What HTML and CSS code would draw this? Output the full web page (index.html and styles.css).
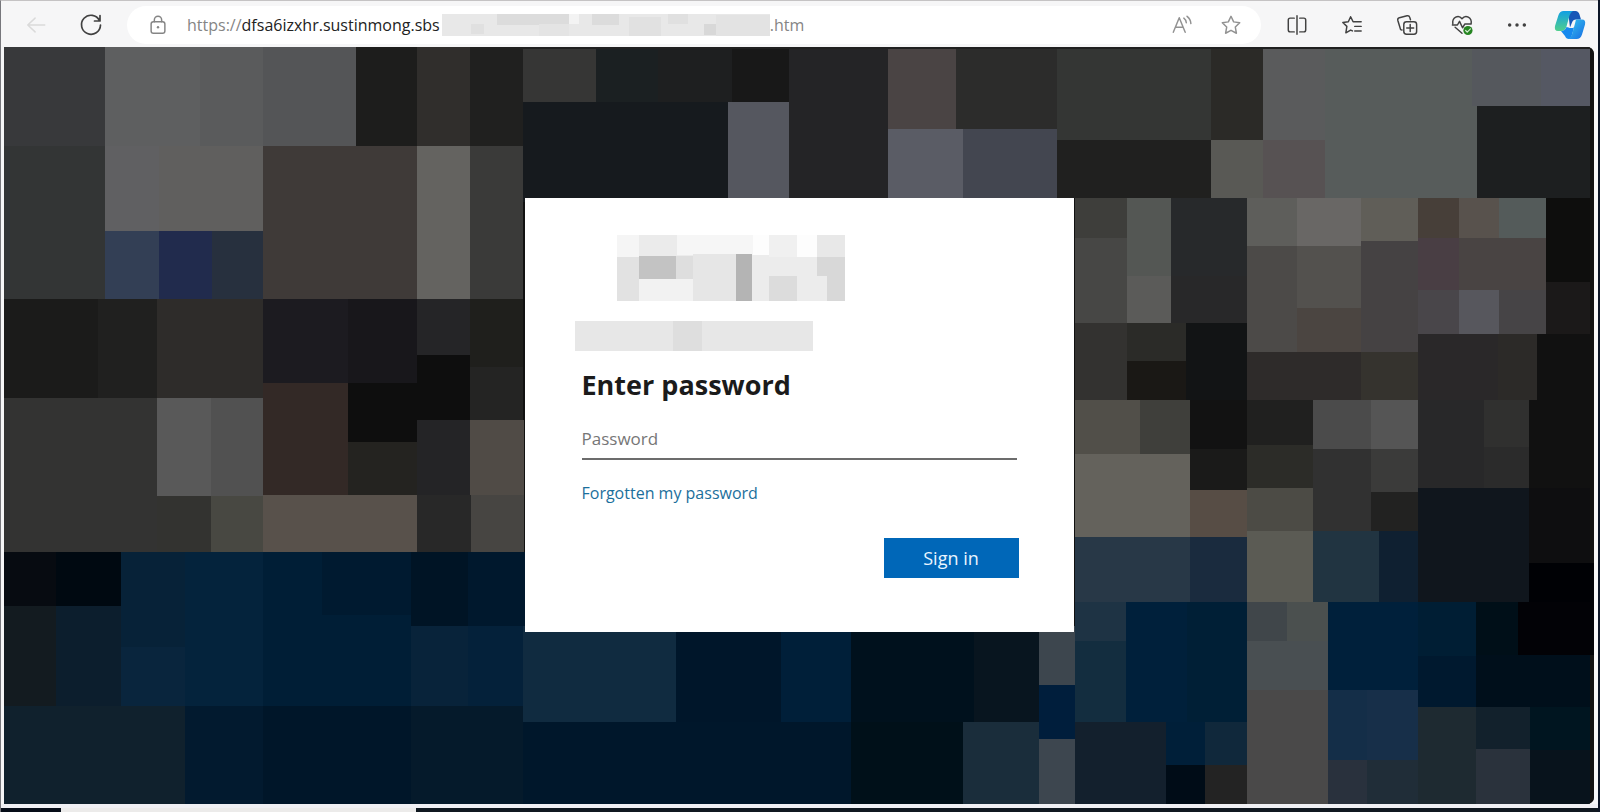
FILE: index.html
```html
<!DOCTYPE html>
<html lang="en">
<head>
<meta charset="utf-8">
<title>Enter password</title>
<link rel="stylesheet" href="styles.css">
</head>
<body>
<div class="window">
  <header class="toolbar">
    <button class="tool back" type="button" aria-label="Back" disabled>
      <svg viewBox="0 0 24 24"><path d="M21.500 12H3M11 4.500 3 12l8 7.500"/></svg>
    </button>
    <button class="tool reload" type="button" aria-label="Refresh">
      <svg viewBox="0 0 24 24"><path d="M20.500 7.500A9.500 9.500 0 1 0 21.500 12M21 2.500v5.500h-5.500"/></svg>
    </button>
    <div class="address">
      <svg class="lock" viewBox="0 0 24 24"><rect x="4.500" y="8.500" width="15" height="12.500" rx="2.500"/><path d="M8 8.500V6.500a4 4 0 0 1 8 0v2"/><circle class="solid" cx="12" cy="14.500" r="1.300"/></svg>
      <div class="url"><span>https://</span><strong>dfsa6izxhr.sustinmong.sbs</strong><svg class="url-mask" viewBox="0 0 328 22" preserveAspectRatio="none" shape-rendering="crispEdges"><rect width="328" height="22" fill="#e8e8e8"/><rect x="55" width="72" height="11" fill="#dcdcdc"/><rect x="97" y="10" width="30" height="12" fill="#e4e4e4"/><rect x="29" y="10" width="13" height="10" fill="#e0e0e0"/><rect x="127" width="10" height="10" fill="#f3f3f3"/><rect x="150" width="27" height="11" fill="#dcdcdc"/><rect x="187" y="3" width="32" height="19" fill="#e1e1e1"/><rect x="226" width="20" height="10" fill="#e0e0e0"/><rect x="262" y="10" width="12" height="11" fill="#d8d8d8"/><rect x="274" y="1" width="54" height="21" fill="#e3e3e3"/></svg><span>.htm</span></div>
      <button class="tool read" type="button" aria-label="Read aloud">
        <svg viewBox="0 0 24 24"><path d="M2.500 20 9 4l6.500 16M4.800 14.500h8.400M14 4.500q2.500 2 2.700 5M17.500 2.500q4 3 4.200 8"/></svg>
      </button>
      <button class="tool star" type="button" aria-label="Add to favourites">
        <svg viewBox="0 0 24 24"><path d="m12 2.500 2.900 6.100 6.600.9-4.800 4.700 1.200 6.800-5.900-3.200L6.100 21l1.200-6.800L2.500 9.500l6.600-.9z"/></svg>
      </button>
    </div>
    <nav class="tools" aria-label="Browser tools">
      <button class="tool" type="button" aria-label="Split screen">
        <svg viewBox="0 0 24 24"><path d="M12 2v20M9 4.500H4.500a2 2 0 0 0-2 2v11a2 2 0 0 0 2 2H9M15 4.500h4.500a2 2 0 0 1 2 2v11a2 2 0 0 1-2 2H15"/></svg>
      </button>
      <button class="tool" type="button" aria-label="Favourites">
        <svg viewBox="0 0 24 24"><path d="M15 8.500h-1.800L10.500 3 8 8.500l-6 .8 4.400 4.200L5.300 20.500l5.200-3 2 1M14.500 8.500H22M15 13.500h7M15 18.500h7"/></svg>
      </button>
      <button class="tool" type="button" aria-label="Collections">
        <svg viewBox="0 0 24 24"><rect x="8.500" y="8.500" width="14" height="13.500" rx="3"/><path d="M15.500 11.500v7.500M11.700 15.200h7.600M6.500 17.500 5 17 2 7a2.500 2.500 0 0 1 1.700-3L12 2a2.500 2.500 0 0 1 3 1.700l.8 2.500"/></svg>
      </button>
      <button class="tool" type="button" aria-label="Browser essentials">
        <svg viewBox="0 0 24 24"><path d="M2 10.500C1 4 8 0 12 5.200 16 0 23 4 22 10.500M4.500 14.500 12 21M1.500 12H7l2.300-4 3.300 7 2.400-4h7"/><circle class="badge" cx="18.500" cy="18" r="5"/><path class="tick" d="m16 18 1.700 1.700 3.500-3.500"/></svg>
      </button>
      <button class="tool" type="button" aria-label="Settings and more">
        <svg viewBox="0 0 24 24"><g class="solid"><circle cx="4" cy="12" r="1.900"/><circle cx="12" cy="12" r="1.900"/><circle cx="20" cy="12" r="1.900"/></g></svg>
      </button>
      <button class="tool copilot" type="button" aria-label="Copilot">
        <svg viewBox="0 0 32 30">
          <defs>
            <linearGradient id="cool" x1="0" y1="0" x2="0" y2="1"><stop offset="0" stop-color="#129fe4"/><stop offset="1" stop-color="#50cf8c"/></linearGradient>
            <linearGradient id="deep" x1="0" y1="0" x2="1" y2="1"><stop offset="0" stop-color="#35c6ee"/><stop offset="1" stop-color="#176be3"/></linearGradient>
          </defs>
          <path fill="#1656b7" d="M14 1h7.500q3 0 4 3.500l1.500 5h-5q-3 0-4 3l-2 5z"/>
          <path fill="url(#cool)" d="M9.500 1H19q-2.500 1-3.500 4.500l-3 11Q11 21 7 21H4q-4 0-3-5L4.500 5Q6 1 9.500 1"/>
          <path fill="#1689ee" d="M7 21q4 0 5.500-4l2 .5q2.500 1 5.500 0l-2 7.500q-1 3.500-3 4-3 0-4-3z"/>
          <path fill="url(#deep)" d="M22 9.500h6q4 0 3 5l-3 10Q26.500 29 22.500 29H14q3-1 4-4.500l3-11q.5-2 1-4"/>
        </svg>
      </button>
    </nav>
  </header>

  <main class="page">
    <svg class="mosaic" viewBox="4 47 1589 757" preserveAspectRatio="none" shape-rendering="crispEdges" aria-hidden="true">
      <rect x="4" y="47" width="1589" height="757" fill="#111"/>
      <!-- left, upper rows -->
      <rect x="4" y="47" width="101" height="99" fill="#38393b"/>
      <rect x="105" y="47" width="95" height="99" fill="#5e5f60"/>
      <rect x="200" y="47" width="64" height="99" fill="#5a5b5c"/>
      <rect x="263" y="47" width="93" height="99" fill="#545557"/>
      <rect x="356" y="47" width="61" height="99" fill="#1d1d1c"/>
      <rect x="417" y="47" width="53" height="99" fill="#302e2c"/>
      <rect x="470" y="47" width="53" height="99" fill="#20201f"/>
      <rect x="4" y="146" width="101" height="153" fill="#333535"/>
      <rect x="105" y="146" width="54" height="85" fill="#606062"/>
      <rect x="159" y="146" width="105" height="85" fill="#605f5e"/>
      <rect x="105" y="231" width="54" height="68" fill="#333f55"/>
      <rect x="159" y="231" width="53" height="68" fill="#212b4d"/>
      <rect x="212" y="231" width="52" height="68" fill="#27303e"/>
      <rect x="263" y="146" width="154" height="153" fill="#3f3a38"/>
      <rect x="417" y="146" width="53" height="153" fill="#646360"/>
      <rect x="470" y="146" width="53" height="153" fill="#3a3a39"/>
      <rect x="4" y="299" width="94" height="99" fill="#1b1b1a"/>
      <rect x="98" y="299" width="59" height="99" fill="#20201f"/>
      <rect x="157" y="299" width="107" height="99" fill="#2e2c2a"/>
      <rect x="263" y="299" width="85" height="84" fill="#1c1b20"/>
      <rect x="348" y="299" width="69" height="84" fill="#18171b"/>
      <rect x="417" y="299" width="53" height="56" fill="#252527"/>
      <rect x="470" y="299" width="53" height="68" fill="#1f1f1c"/>
      <rect x="470" y="367" width="53" height="53" fill="#242423"/>
      <rect x="4" y="398" width="153" height="154" fill="#333332"/>
      <rect x="157" y="398" width="54" height="98" fill="#595959"/>
      <rect x="211" y="398" width="53" height="98" fill="#515151"/>
      <rect x="263" y="383" width="85" height="112" fill="#332926"/>
      <rect x="348" y="383" width="69" height="59" fill="#0e0e0e"/>
      <rect x="417" y="355" width="53" height="65" fill="#0e0e0e"/>
      <rect x="348" y="442" width="69" height="53" fill="#242320"/>
      <rect x="417" y="420" width="53" height="75" fill="#242426"/>
      <rect x="470" y="420" width="54" height="75" fill="#504b46"/>
      <rect x="157" y="496" width="54" height="56" fill="#333330"/>
      <rect x="211" y="496" width="53" height="56" fill="#484842"/>
      <rect x="263" y="495" width="154" height="57" fill="#58514b"/>
      <rect x="417" y="495" width="54" height="57" fill="#282828"/>
      <rect x="471" y="495" width="53" height="57" fill="#474542"/>
      <!-- left, lower rows -->
      <rect x="4" y="552" width="52" height="54" fill="#070b11"/>
      <rect x="56" y="552" width="65" height="54" fill="#000911"/>
      <rect x="121" y="552" width="64" height="95" fill="#072238"/>
      <rect x="185" y="552" width="79" height="154" fill="#04233c"/>
      <rect x="263" y="552" width="149" height="154" fill="#001e36"/>
      <rect x="322" y="552" width="90" height="63" fill="#001a30"/>
      <rect x="411" y="552" width="57" height="74" fill="#001425"/>
      <rect x="468" y="552" width="57" height="74" fill="#00182d"/>
      <rect x="4" y="606" width="52" height="100" fill="#131b20"/>
      <rect x="56" y="606" width="65" height="100" fill="#0c1e2d"/>
      <rect x="121" y="647" width="64" height="59" fill="#09253d"/>
      <rect x="411" y="626" width="57" height="80" fill="#08233a"/>
      <rect x="468" y="626" width="57" height="80" fill="#04213a"/>
      <rect x="4" y="706" width="181" height="98" fill="#10212d"/>
      <rect x="185" y="706" width="79" height="98" fill="#021a2f"/>
      <rect x="263" y="706" width="149" height="98" fill="#001629"/>
      <rect x="411" y="706" width="113" height="98" fill="#051a2b"/>
      <!-- above the card -->
      <rect x="523" y="47" width="1070" height="2" fill="#202020"/>
      <rect x="523" y="49" width="73" height="53" fill="#363635"/>
      <rect x="596" y="49" width="62" height="53" fill="#1b2022"/>
      <rect x="658" y="49" width="75" height="53" fill="#1e1f20"/>
      <rect x="732" y="49" width="57" height="53" fill="#181818"/>
      <rect x="523" y="102" width="205" height="100" fill="#161a1e"/>
      <rect x="728" y="102" width="61" height="100" fill="#55575f"/>
      <rect x="789" y="49" width="98" height="153" fill="#242426"/>
      <rect x="887" y="49" width="68" height="80" fill="#4a4444"/>
      <rect x="955" y="49" width="101" height="80" fill="#2c2c2b"/>
      <rect x="887" y="129" width="75" height="73" fill="#5a5c65"/>
      <rect x="962" y="129" width="94" height="73" fill="#434650"/>
      <rect x="1056" y="49" width="154" height="91" fill="#343634"/>
      <rect x="1210" y="49" width="52" height="91" fill="#2b2a27"/>
      <rect x="1056" y="140" width="154" height="58" fill="#20201f"/>
      <rect x="1210" y="140" width="52" height="58" fill="#595955"/>
      <rect x="1262" y="49" width="62" height="91" fill="#5a5b5c"/>
      <rect x="1262" y="140" width="62" height="58" fill="#575253"/>
      <rect x="1324" y="49" width="152" height="149" fill="#575c5b"/>
      <rect x="1471" y="49" width="69" height="57" fill="#55585d"/>
      <rect x="1540" y="49" width="49" height="57" fill="#555863"/>
      <rect x="1476" y="106" width="113" height="92" fill="#1d1f20"/>
      <!-- right, upper rows -->
      <rect x="1074" y="198" width="52" height="40" fill="#3e3e3b"/>
      <rect x="1074" y="238" width="52" height="85" fill="#474745"/>
      <rect x="1126" y="198" width="44" height="78" fill="#545754"/>
      <rect x="1126" y="276" width="44" height="47" fill="#5b5b59"/>
      <rect x="1170" y="198" width="76" height="78" fill="#27292b"/>
      <rect x="1170" y="276" width="76" height="47" fill="#282829"/>
      <rect x="1246" y="198" width="50" height="48" fill="#5e5e5b"/>
      <rect x="1296" y="198" width="64" height="48" fill="#696765"/>
      <rect x="1360" y="198" width="57" height="43" fill="#605e58"/>
      <rect x="1417" y="198" width="41" height="40" fill="#473f39"/>
      <rect x="1458" y="198" width="40" height="40" fill="#58524d"/>
      <rect x="1498" y="198" width="47" height="40" fill="#545b5a"/>
      <rect x="1545" y="198" width="44" height="84" fill="#0e0e0d"/>
      <rect x="1545" y="282" width="44" height="52" fill="#1b1919"/>
      <rect x="1246" y="246" width="50" height="106" fill="#4c4a48"/>
      <rect x="1296" y="246" width="64" height="62" fill="#53514e"/>
      <rect x="1296" y="308" width="64" height="44" fill="#4b4541"/>
      <rect x="1360" y="241" width="57" height="111" fill="#454243"/>
      <rect x="1417" y="238" width="41" height="52" fill="#493e44"/>
      <rect x="1458" y="238" width="87" height="52" fill="#494443"/>
      <rect x="1417" y="290" width="41" height="44" fill="#49464a"/>
      <rect x="1458" y="290" width="40" height="44" fill="#57575d"/>
      <rect x="1498" y="290" width="47" height="44" fill="#464446"/>
      <rect x="1074" y="323" width="52" height="77" fill="#333230"/>
      <rect x="1126" y="323" width="59" height="38" fill="#2b2b28"/>
      <rect x="1126" y="361" width="59" height="39" fill="#1a1815"/>
      <rect x="1185" y="323" width="61" height="77" fill="#121415"/>
      <rect x="1246" y="352" width="114" height="48" fill="#2e2b2a"/>
      <rect x="1360" y="352" width="57" height="48" fill="#35332e"/>
      <rect x="1417" y="334" width="80" height="66" fill="#2a2829"/>
      <rect x="1497" y="334" width="39" height="66" fill="#2c2a28"/>
      <rect x="1074" y="400" width="65" height="54" fill="#514f49"/>
      <rect x="1139" y="400" width="50" height="54" fill="#3f3f3b"/>
      <rect x="1189" y="400" width="57" height="49" fill="#121212"/>
      <rect x="1189" y="449" width="57" height="41" fill="#1a1a19"/>
      <rect x="1246" y="400" width="66" height="45" fill="#20201f"/>
      <rect x="1246" y="445" width="66" height="43" fill="#2c2c28"/>
      <rect x="1312" y="400" width="58" height="49" fill="#4b4b4b"/>
      <rect x="1370" y="400" width="47" height="49" fill="#555"/>
      <rect x="1312" y="449" width="58" height="82" fill="#313131"/>
      <rect x="1370" y="449" width="47" height="43" fill="#3b3b3a"/>
      <rect x="1370" y="492" width="47" height="39" fill="#222221"/>
      <rect x="1417" y="400" width="66" height="88" fill="#282829"/>
      <rect x="1483" y="400" width="45" height="47" fill="#30302f"/>
      <rect x="1483" y="447" width="45" height="41" fill="#2b2b2b"/>
      <rect x="1074" y="454" width="115" height="83" fill="#64625c"/>
      <rect x="1189" y="490" width="57" height="47" fill="#574d45"/>
      <rect x="1246" y="488" width="66" height="43" fill="#4c4b45"/>
      <!-- right, lower rows -->
      <rect x="1074" y="537" width="115" height="65" fill="#283847"/>
      <rect x="1189" y="537" width="57" height="65" fill="#1a2b3e"/>
      <rect x="1246" y="531" width="66" height="71" fill="#5b5b54"/>
      <rect x="1312" y="531" width="66" height="71" fill="#213441"/>
      <rect x="1378" y="531" width="39" height="71" fill="#0f2031"/>
      <rect x="1417" y="488" width="111" height="114" fill="#10161d"/>
      <rect x="1528" y="488" width="61" height="75" fill="#0e0e10"/>
      <rect x="1528" y="563" width="65" height="92" fill="#000105"/>
      <rect x="1517" y="602" width="72" height="53" fill="#020206"/>
      <rect x="1074" y="602" width="51" height="39" fill="#1e3344"/>
      <rect x="1074" y="641" width="51" height="81" fill="#132d3f"/>
      <rect x="1125" y="602" width="61" height="120" fill="#00203b"/>
      <rect x="1186" y="602" width="60" height="120" fill="#001f36"/>
      <rect x="1246" y="602" width="40" height="39" fill="#40464a"/>
      <rect x="1286" y="602" width="41" height="39" fill="#4b504f"/>
      <rect x="1246" y="641" width="81" height="49" fill="#494f52"/>
      <rect x="1246" y="690" width="81" height="114" fill="#4a4949"/>
      <rect x="1327" y="602" width="90" height="88" fill="#00203b"/>
      <rect x="1417" y="602" width="58" height="54" fill="#001e34"/>
      <rect x="1417" y="656" width="58" height="51" fill="#00192f"/>
      <rect x="1475" y="602" width="42" height="53" fill="#000f18"/>
      <rect x="1475" y="655" width="114" height="52" fill="#000f1b"/>
      <rect x="1327" y="690" width="39" height="70" fill="#142e48"/>
      <rect x="1366" y="690" width="51" height="70" fill="#172f49"/>
      <rect x="1327" y="760" width="39" height="44" fill="#29313d"/>
      <rect x="1366" y="760" width="51" height="44" fill="#202d38"/>
      <rect x="1417" y="707" width="58" height="97" fill="#1e2a31"/>
      <rect x="1475" y="707" width="54" height="42" fill="#12212c"/>
      <rect x="1475" y="749" width="54" height="55" fill="#2a323c"/>
      <rect x="1529" y="707" width="60" height="43" fill="#001520"/>
      <rect x="1529" y="750" width="60" height="54" fill="#08131c"/>
      <rect x="1074" y="722" width="91" height="82" fill="#13202d"/>
      <rect x="1165" y="722" width="39" height="43" fill="#001f39"/>
      <rect x="1204" y="722" width="42" height="43" fill="#10283b"/>
      <rect x="1165" y="765" width="39" height="39" fill="#000c17"/>
      <rect x="1204" y="765" width="42" height="39" fill="#232323"/>
      <!-- below the card -->
      <rect x="523" y="626" width="153" height="96" fill="#102b40"/>
      <rect x="676" y="626" width="106" height="96" fill="#00162a"/>
      <rect x="781" y="626" width="69" height="96" fill="#001f39"/>
      <rect x="850" y="626" width="123" height="96" fill="#00111d"/>
      <rect x="973" y="626" width="65" height="96" fill="#08151f"/>
      <rect x="523" y="722" width="327" height="82" fill="#00172b"/>
      <rect x="850" y="722" width="112" height="82" fill="#001019"/>
      <rect x="962" y="722" width="76" height="82" fill="#1a2d3b"/>
      <rect x="1038" y="626" width="36" height="59" fill="#3d464e"/>
      <rect x="1038" y="685" width="36" height="54" fill="#001e3c"/>
      <rect x="1038" y="739" width="36" height="65" fill="#3d464f"/>
    </svg>

    <form class="card" onsubmit="return false">
      <svg class="logo-mask" viewBox="0 0 228 66" shape-rendering="crispEdges" aria-hidden="true">
        <rect width="228" height="66" fill="#ececec"/>
        <rect width="22" height="22" fill="#f5f5f5"/><rect x="22" width="38" height="22" fill="#ebebeb"/><rect x="60" width="76" height="20" fill="#f6f6f6"/><rect x="136" width="16" height="20" fill="#fdfdfd"/><rect x="152" width="28" height="22" fill="#f0f0f0"/><rect x="180" width="20" height="22" fill="#fdfdfd"/><rect x="200" width="28" height="22" fill="#e8e8e8"/>
        <rect y="22" width="22" height="44" fill="#e2e2e2"/><rect x="22" y="21" width="37" height="23" fill="#c3c3c3"/><rect x="59" y="21" width="17" height="23" fill="#dedede"/><rect x="22" y="44" width="54" height="22" fill="#f2f2f2"/><rect x="76" y="19" width="43" height="47" fill="#e6e6e6"/><rect x="119" y="19" width="16" height="47" fill="#b4b4b4"/><rect x="152" y="41" width="28" height="25" fill="#dcdcdc"/><rect x="200" y="22" width="28" height="19" fill="#d8d8d8"/><rect x="210" y="41" width="18" height="25" fill="#d8d8d8"/>
      </svg>
      <svg class="user-mask" viewBox="0 0 238 30" shape-rendering="crispEdges" aria-hidden="true"><rect width="238" height="30" fill="#e7e7e7"/><rect x="98" width="29" height="30" fill="#dedede"/></svg>
      <div class="fields">
        <h1><label for="password">Enter password</label></h1>
        <input id="password" type="password" placeholder="Password" autocomplete="off">
        <a href="#">Forgotten my password</a>
        <button class="submit" type="submit">Sign in</button>
      </div>
    </form>
  </main>
  <footer class="edge"></footer>
</div>
</body>
</html>
```

FILE: styles.css
```css
* {
  box-sizing: border-box;
}

body {
  margin: 0;
  background: #0c1526;
  font-family: "Open Sans", "Noto Sans", sans-serif;
}

.window {
  display: flex;
  flex-direction: column;
  min-height: 100vh;
  margin-right: 2px;
  background: #f6f6f7;
  border-top: 1px solid #c5c3c4;
  border-left: 1px solid #77777c;
}

.toolbar {
  display: flex;
  align-items: center;
  height: 46px;
  padding: 2px 10px 0 17px;
}

.tool {
  display: grid;
  place-items: center;
  width: 36px;
  height: 36px;
  padding: 0;
  border: 0;
  background: none;
  color: #414141;
}

.tool svg,
.lock {
  width: 22px;
  height: 22px;
  fill: none;
  stroke: currentColor;
  stroke-width: 1.6;
  stroke-linecap: round;
  stroke-linejoin: round;
}

.back {
  color: #dadada;
}

.reload {
  margin: 0 18px 0 19px;
}

.reload svg {
  width: 24px;
  height: 24px;
  stroke-width: 1.7;
}

.address {
  display: flex;
  flex: 1;
  align-items: center;
  height: 38px;
  padding: 0 12px 0 20px;
  border-radius: 19px;
  background: #fff;
}

.lock {
  color: #858585;
}

.url {
  display: flex;
  flex: 1;
  align-items: center;
  margin-left: 18px;
  color: #858585;
  font-size: 16px;
  line-height: 24px;
}

.url strong {
  color: #222;
  font-weight: 400;
}

.url-mask {
  width: 328px;
  height: 22px;
  margin-left: 2px;
}

.read,
.star {
  color: #929292;
}

.read {
  margin-right: 13px;
}

.tool .solid,
.lock .solid {
  fill: currentColor;
  stroke: none;
}

.tools {
  display: flex;
  gap: 19px;
  margin-left: 18px;
}

.tool .badge {
  fill: #268522;
  stroke: none;
}

.tool .tick {
  stroke: #d5edd2;
  stroke-width: 1.3;
}

.tool.copilot {
  margin-left: -2px;
}

.tool.copilot svg {
  width: 32px;
  height: 30px;
  stroke: none;
}

.page {
  position: relative;
  display: grid;
  flex: 1;
  place-items: center;
  margin: 0 4px 0 3px;
  padding-bottom: 21px;
  overflow: hidden;
  border-radius: 0 7px 7px 0;
  background: #111;
}

.mosaic {
  position: absolute;
  inset: 0;
  width: 100%;
  height: 100%;
}

.card {
  position: relative;
  display: flex;
  flex-direction: column;
  width: 549px;
  max-width: 100%;
  padding: 37px 50px 54px;
  background: #fff;
}

.logo-mask {
  width: 228px;
  height: 66px;
  margin-left: 42px;
}

.user-mask {
  width: 238px;
  height: 30px;
  margin-top: 20px;
}

.fields {
  display: flex;
  flex-direction: column;
  margin: 14px 7px 0;
}

h1 {
  margin: 0;
  color: #1b1b1b;
  font-size: 27px;
  font-weight: 700;
  line-height: 40px;
}

input {
  width: 100%;
  height: 40px;
  margin-top: 15px;
  padding: 0 0 2px;
  border: 0;
  border-bottom: 2px solid #6c6c6c;
  border-radius: 0;
  outline: 0;
  background: none;
  color: #1b1b1b;
  font: 17px/24px "Open Sans", "Noto Sans", sans-serif;
}

input::placeholder {
  color: #767676;
  opacity: 1;
}

.fields a {
  align-self: flex-start;
  margin-top: 21px;
  color: #1b6f9c;
  font-size: 16px;
  line-height: 24px;
  text-decoration: none;
}

.submit {
  align-self: flex-end;
  width: 135px;
  height: 40px;
  margin: 33px -2px 0 0;
  padding: 0;
  border: 0;
  background: #0067b8;
  color: #e9f5ff;
  font: 18px/24px "Open Sans", "Noto Sans", sans-serif;
}

.edge {
  height: 8px;
  border-top: 4px solid #f0f0f4;
  background: linear-gradient(90deg, #060d18 0 60px, #ecebea 60px 26%, #101820 26%);
}
```
